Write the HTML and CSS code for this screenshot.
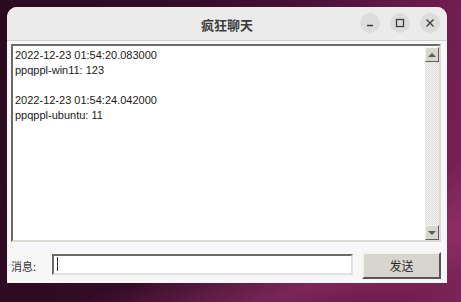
FILE: index.html
```html
<!DOCTYPE html>
<html lang="zh">
<head>
    <meta charset="UTF-8">
    <meta name="viewport" content="width=device-width, initial-scale=1.0">
    <title>疯狂聊天</title>
    <link rel="stylesheet" href="styles.css">
</head>
<body>
    <div class="window">
        <div class="titlebar">
            <span class="title">疯狂聊天</span>
            <div class="controls">
                <span class="ctl">
                    <svg width="10" height="10" viewBox="0 0 10 10"><path d="M2 7.5h6" stroke="#3c3c3c" stroke-width="1.3"/></svg>
                </span>
                <span class="ctl">
                    <svg width="10" height="10" viewBox="0 0 10 10"><rect x="1.5" y="1.5" width="7" height="7" fill="none" stroke="#3c3c3c" stroke-width="1.3"/></svg>
                </span>
                <span class="ctl">
                    <svg width="10" height="10" viewBox="0 0 10 10"><path d="M1.5 1.5l7 7M8.5 1.5l-7 7" stroke="#3c3c3c" stroke-width="1.3"/></svg>
                </span>
            </div>
        </div>
        <div class="content">
            <div class="log-frame">
                <div class="log">
                    <div>2022-12-23 01:54:20.083000</div>
                    <div>ppqppl-win11: 123</div>
                    <div>&nbsp;</div>
                    <div>2022-12-23 01:54:24.042000</div>
                    <div>ppqppl-ubuntu: 11</div>
                </div>
                <div class="scrollbar">
                    <span class="arrow up"></span>
                    <span class="trough"></span>
                    <span class="arrow down"></span>
                </div>
            </div>
            <div class="send-row">
                <span class="label">消息:</span>
                <div class="entry"><span class="caret"></span></div>
                <button class="send">发送</button>
            </div>
        </div>
    </div>
</body>
</html>
```

FILE: styles.css
```css
body {
    margin: 0;
    width: 461px;
    height: 302px;
    overflow: hidden;
    padding: 7px 0 0 7px;
    box-sizing: border-box;
    background:
        linear-gradient(160deg, transparent 70%, rgba(170, 60, 120, 0.45) 85%, transparent 95%),
        linear-gradient(100deg, #2b0a20 0%, #330c26 35%, #4a1236 60%, #6c1b4c 85%, #7b2458 100%);
    font-family: "Liberation Sans", "Noto Sans CJK SC", sans-serif;
}

.window {
    width: 440px;
    height: 276px;
    display: flex;
    flex-direction: column;
    border-radius: 10px 10px 0 0;
    overflow: hidden;
    background-color: #f7f7f7;
}

.titlebar {
    height: 33px;
    flex-shrink: 0;
    background-color: #ebebeb;
    border-bottom: 1px solid #cfcfcf;
    display: flex;
    align-items: center;
    justify-content: center;
    position: relative;
}

.title {
    font-family: "Noto Sans CJK SC", sans-serif;
    font-weight: bold;
    font-size: 13px;
    color: #3d3d3d;
    margin-top: 2px;
}

.controls {
    position: absolute;
    right: 7px;
    top: 6px;
    display: flex;
    gap: 10px;
}

.ctl {
    width: 20px;
    height: 20px;
    border-radius: 50%;
    background-color: #dcdcdc;
    display: flex;
    align-items: center;
    justify-content: center;
}

.content {
    flex: 1;
    display: flex;
    flex-direction: column;
    padding: 3px 6px 4px 4px;
    gap: 10px;
}

.log-frame {
    height: 198px;
    box-sizing: border-box;
    border: 2px solid;
    border-color: #6a6a6a #dedbd6 #dedbd6 #6a6a6a;
    background-color: #fff;
    display: flex;
}

.log {
    flex: 1;
    padding: 2px;
    font-size: 11px;
    line-height: 15px;
    color: #1a1a1a;
}

.scrollbar {
    width: 14px;
    display: flex;
    flex-direction: column;
    padding-top: 1px;
}

.arrow {
    height: 15px;
    box-sizing: border-box;
    border: 1px solid;
    border-color: #f4f4f4 #5c5c5c #5c5c5c #f4f4f4;
    background-color: #d9d6d0;
    display: flex;
    align-items: center;
    justify-content: center;
}

.arrow::after {
    content: "";
    border-left: 4px solid transparent;
    border-right: 4px solid transparent;
}

.up::after {
    border-bottom: 4px solid #5a5a5a;
}

.down::after {
    border-top: 4px solid #5a5a5a;
}

.trough {
    flex: 1;
    background: repeating-conic-gradient(#dcdbd8 0 25%, #f6f6f6 0 50%) 0 0 / 2px 2px;
}

.send-row {
    height: 27px;
    display: flex;
    align-items: center;
}

.label {
    width: 41px;
    font-family: "Noto Sans CJK SC", sans-serif;
    font-size: 11px;
    color: #333;
}

.entry {
    width: 302px;
    height: 21px;
    box-sizing: border-box;
    border: 2px solid;
    border-color: #6a6a6a #e4e1dc #e4e1dc #6a6a6a;
    background-color: #fff;
    margin-top: -3px;
    display: flex;
    align-items: center;
    padding-left: 3px;
}

.caret {
    width: 1px;
    height: 14px;
    background-color: #333;
}

.send {
    margin-left: 9px;
    width: 79px;
    height: 27px;
    border: 2px solid;
    border-color: #f2f1ee #555 #555 #f2f1ee;
    background-color: #d8d4ce;
    font-family: "Noto Sans CJK SC", sans-serif;
    font-size: 12px;
    color: #2a2a2a;
    padding: 0;
}
```
